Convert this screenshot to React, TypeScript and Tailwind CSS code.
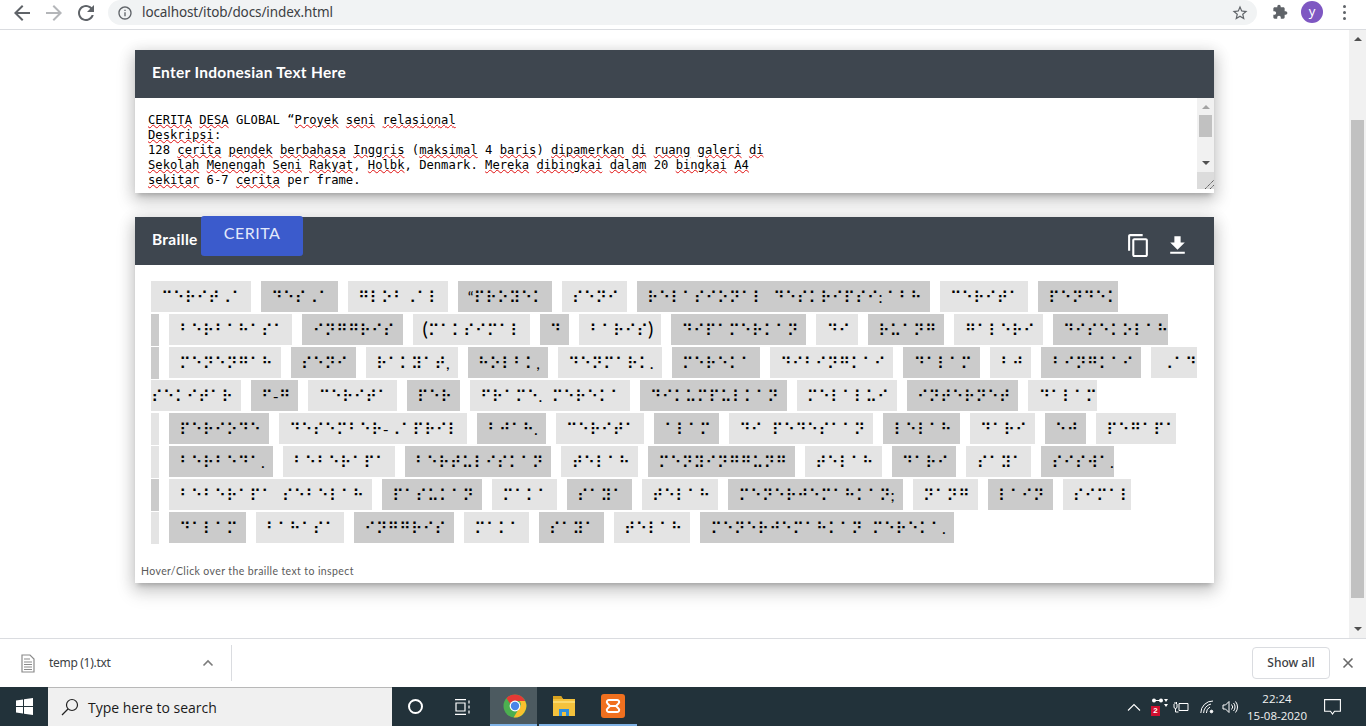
import { Fragment } from 'react';

const BRAILLE: Record<string, string> = {
  a: '⠁', b: '⠃', c: '⠉', d: '⠙', e: '⠑', f: '⠋', g: '⠛', h: '⠓', i: '⠊', j: '⠚', k: '⠅', l: '⠇', m: '⠍',
  n: '⠝', o: '⠕', p: '⠏', q: '⠟', r: '⠗', s: '⠎', t: '⠞', u: '⠥', v: '⠧', w: '⠺', x: '⠭', y: '⠽', z: '⠵',
  A: '⠠⠁', '1': '⠁', '2': '⠃', '3': '⠉', '4': '⠙', '5': '⠑', '6': '⠋', '7': '⠛', '8': '⠓', '9': '⠊', '0': '⠚',
};

const toBraille = (s: string) => s.split('').map((c) => BRAILLE[c] ?? c).join('');

// a trailing | marks a word whose right padding wraps onto the next line
const WORDS = [
  'ceritA', 'desA', 'globAl', '“proyek', 'seni', 'relasional deskripsi:128', 'cerita', 'pendek|',
  'berbahasa', 'inggris', '(maksimal', '4', 'baris)', 'dipamerkan', 'di', 'ruang', 'galeri', 'disekolah|',
  'menengah', 'seni', 'rakyat,', 'holbk,', 'denmark.', 'mereka', 'dibingkai', 'dalam', '20', 'bingkai', 'A4 sekitar',
  '6-7', 'cerita', 'per', 'frame. mereka', 'dikumpulkan', 'melalui', 'internet', 'dalam|',
  'periode', 'desember-April', '2018.', 'cerita', 'alam', 'di pedesaan', 'lelah', 'dari', 'ej', 'pegapa|',
  'berbeda.', 'beberapa', 'bertuliskan', 'telah', 'menyinggung', 'telah', 'dari', 'saya', 'siswa.|',
  'beberapa sebelah', 'pasukan', 'maka', 'saya', 'telah', 'menerjemahkan;', 'nang', 'lain', 'simal|',
  'dalam', 'bahasa', 'inggris', 'maka', 'saya', 'telah', 'menerjemahkan mereka.',
];

const TEXT_LINES: (string | [string])[][] = [
  [['CERITA'], ' ', ['DESA'], ' GLOBAL “', ['Proyek'], ' ', ['seni'], ' ', ['relasional']],
  [['Deskripsi'], ':'],
  ['128 ', ['cerita'], ' ', ['pendek'], ' ', ['berbahasa'], ' ', ['Inggris'], ' (', ['maksimal'], ' 4 ', ['baris'], ') ', ['dipamerkan'], ' ', ['di'], ' ', ['ruang'], ' ', ['galeri'], ' ', ['di']],
  [['Sekolah'], ' ', ['Menengah'], ' ', ['Seni'], ' ', ['Rakyat'], ', ', ['Holbk'], ', Denmark. ', ['Mereka'], ' ', ['dibingkai'], ' ', ['dalam'], ' 20 ', ['bingkai'], ' ', ['A4']],
  [['sekitar'], ' 6-7 ', ['cerita'], ' per frame.'],
];

const Icon = ({ d, size = 24, className = '' }: { d: string; size?: number; className?: string }) => (
  <svg width={size} height={size} viewBox="0 0 24 24" fill="currentColor" className={className}>
    <path d={d} />
  </svg>
);

const WordPart = ({ part }: { part: string }) => (
  <>
    {part.split(/([:()])/).map((piece, i) => {
      if (piece === ':') return <span key={i} className="pr-1">:</span>;
      if (piece === '(' || piece === ')') return <span key={i} className="text-[20px] leading-none">{piece}</span>;
      return <Fragment key={i}>{toBraille(piece)}</Fragment>;
    })}
  </>
);

const BrailleWord = ({ word, index }: { word: string; index: number }) => {
  const endsRow = word.endsWith('|');
  const parts = word.replace('|', '').split(' ');
  const bg = index % 2 === 0 ? 'bg-[#e4e4e4]' : 'bg-[#cbcbcb]';
  return (
    <>
      <span className={`pl-2.5 py-[6.4px] ${bg} ${endsRow ? '' : 'pr-2 mr-2.5'}`}>
        {parts.map((part, i) => (
          <span key={i}>
            {i > 0 && <span className="[word-spacing:5px]"> </span>}
            <WordPart part={part} />
          </span>
        ))}
      </span>
      {endsRow && (
        <>
          <br />
          <span className={`inline-block w-2 h-8 mt-px align-top mr-2.5 ${bg}`} />
        </>
      )}
      <wbr />
    </>
  );
};

const BrowserBar = () => (
  <div className="h-[30px] shrink-0 flex items-start bg-white border-b border-[#dadce0] text-[#5f6368]">
    <div className="flex items-center pl-[10px] h-[25px] gap-2">
      <Icon d="M20 11H7.83l5.59-5.59L12 4l-8 8 8 8 1.41-1.41L7.83 13H20v-2z" />
      <Icon d="M4 11h12.17l-5.59-5.59L12 4l8 8-8 8-1.41-1.41L16.17 13H4v-2z" className="text-[#b4b6b9]" />
      <Icon d="M17.65 6.35C16.2 4.9 14.21 4 12 4c-4.42 0-7.99 3.58-7.99 8s3.57 8 7.99 8c3.73 0 6.84-2.55 7.73-6h-2.08c-.82 2.33-3.04 4-5.65 4-3.31 0-6-2.69-6-6s2.69-6 6-6c1.66 0 3.14.69 4.22 1.78L13 11h7V4l-2.35 2.35z" />
    </div>
    <div className="ml-[10px] w-[1149px] h-[25px] rounded-r-full rounded-l-full bg-[#f1f3f4] flex items-center pl-[9px] pr-[6px]">
      <Icon d="M11 7h2v2h-2zm0 4h2v6h-2zm1-9C6.48 2 2 6.48 2 12s4.48 10 10 10 10-4.48 10-10S17.52 2 12 2zm0 18c-4.41 0-8-3.59-8-8s3.59-8 8-8 8 3.59 8 8-3.59 8-8 8z" size={16} />
      <span className="ml-[9px] pb-px text-[13.5px] text-[#3c4043] font-['Noto_Sans',sans-serif] tracking-[-0.1px]">localhost/itob/docs/index.html</span>
      <Icon d="M22 9.24l-7.19-.62L12 2 9.19 8.63 2 9.24l5.46 4.73L5.82 21 12 17.27 18.18 21l-1.63-7.03L22 9.24zM12 15.4l-3.76 2.27 1-4.28-3.32-2.88 4.38-.38L12 6.1l1.71 4.04 4.38.38-3.32 2.88 1 4.28L12 15.4z" size={18} className="ml-auto mr-[2px]" />
    </div>
    <div className="flex items-center h-[24px] pl-[15px]">
      <Icon d="M20.5 11H19V7c0-1.1-.9-2-2-2h-4V3.5C13 2.12 11.88 1 10.5 1S8 2.12 8 3.5V5H4c-1.1 0-1.99.9-1.99 2v3.8H3.5c1.49 0 2.7 1.21 2.7 2.7s-1.21 2.7-2.7 2.7H2V20c0 1.1.9 2 2 2h3.8v-1.5c0-1.49 1.21-2.7 2.7-2.7 1.49 0 2.7 1.21 2.7 2.7V22H17c1.1 0 2-.9 2-2v-4h1.5c1.38 0 2.5-1.12 2.5-2.5S21.88 11 20.5 11z" size={16} />
      <div className="ml-[13px] w-[22px] h-[22px] rounded-full bg-[#7e57c2] text-white text-[13px] leading-[20px] text-center font-['Noto_Sans',sans-serif]">y</div>
      <div className="ml-[20px] flex flex-col gap-[3px]">
        <span className="w-[3px] h-[3px] rounded-full bg-[#5f6368]" />
        <span className="w-[3px] h-[3px] rounded-full bg-[#5f6368]" />
        <span className="w-[3px] h-[3px] rounded-full bg-[#5f6368]" />
      </div>
    </div>
  </div>
);

const Header = ({ children }: { children: React.ReactNode }) => (
  <div className="h-12 bg-[#3e464f] flex items-center pl-[17px] text-white text-[15.5px] font-bold font-[Lato,sans-serif] relative">
    {children}
  </div>
);

const CARD = 'w-[1079px] bg-white shadow-[0_8px_17px_2px_rgba(0,0,0,0.14),0_3px_14px_2px_rgba(0,0,0,0.12),0_5px_5px_-3px_rgba(0,0,0,0.2)]';

const InputCard = () => (
  <div className={CARD}>
    <Header><span className="pb-[3px] tracking-[0.3px]">Enter Indonesian Text Here</span></Header>
    <div className="h-[95px] flex">
      <div className="flex-1 pl-[13px] pt-[15px] overflow-hidden font-['DejaVu_Sans_Mono',monospace] text-[12.18px] leading-[15px] text-black whitespace-pre">
        {TEXT_LINES.map((line, i) => (
          <div key={i}>
            {line.map((seg, j) =>
              typeof seg === 'string' ? (
                <span key={j}>{seg}</span>
              ) : (
                <span key={j} className="underline decoration-wavy decoration-[#e01010] decoration-[0.6px] underline-offset-0">{seg[0]}</span>
              ),
            )}
          </div>
        ))}
      </div>
      <div className="w-[17px] h-[91px] flex flex-col">
        <div className="h-[74px] bg-[#f1f1f1] flex flex-col items-center">
          <div className="mt-[7px] w-0 h-0 border-x-[4px] border-x-transparent border-b-[4px] border-b-[#a3a3a3]" />
          <div className="mt-[6px] w-[13px] h-[22px] bg-[#c1c1c1]" />
          <div className="mt-auto mb-[7px] w-0 h-0 border-x-[4px] border-x-transparent border-t-[4px] border-t-[#505050]" />
        </div>
        <div className="h-[17px] bg-[#dcdcdc] flex items-end justify-end">
          <svg width="10" height="10" viewBox="0 0 10 10" stroke="#555" strokeWidth="1" strokeDasharray="1.5 0.5">
            <path d="M1 10 L10 1 M6 10 L10 6" />
          </svg>
        </div>
      </div>
    </div>
  </div>
);

const BrailleCard = () => (
  <div className={CARD}>
    <Header>
      <span className="pb-[3px] tracking-[0.3px]">Braille</span>
      <div className="absolute left-[66px] -top-px w-[102px] h-10 rounded-[3px] bg-[#3b5bcc] text-[#e3e9fb] text-[16px] font-normal text-center leading-[34px] tracking-[0.5px]">CERITA</div>
      <div className="ml-auto flex items-center gap-[14.5px] pr-[24px] pt-[9px]">
        <Icon d="M16 1H4c-1.1 0-2 .9-2 2v14h2V3h12V1zm3 4H8c-1.1 0-2 .9-2 2v14c0 1.1.9 2 2 2h11c1.1 0 2-.9 2-2V7c0-1.1-.9-2-2-2zm0 16H8V7h11v14z" size={25} />
        <Icon d="M19 9h-4V3H9v6H5l7 7 7-7zM5 18v2h14v-2H5z" size={25} />
      </div>
    </Header>
    <div className="h-[318px] flex flex-col">
      <div className="px-4 pt-[15px] text-[16px] leading-[33px] text-black font-[Lato,'DejaVu_Sans',sans-serif]">
        {WORDS.map((w, i) => (
          <BrailleWord key={i} word={w} index={i} />
        ))}
      </div>
      <div className="mt-auto pl-1.5 pb-[5px] text-[10.5px] leading-[14px] tracking-[0.4px] text-[#5a5a5a] font-[Lato,sans-serif]">
        Hover/Click over the braille text to inspect
      </div>
    </div>
  </div>
);

const PageScrollbar = () => (
  <div className="w-[17px] bg-[#f1f1f1] flex flex-col items-center">
    <div className="mt-[7px] w-0 h-0 border-x-[4px] border-x-transparent border-b-[4px] border-b-[#505050]" />
    <div className="mt-[79px] w-[13px] h-[478px] bg-[#c1c1c1]" />
    <div className="mt-auto mb-[7px] w-0 h-0 border-x-[4px] border-x-transparent border-t-[4px] border-t-[#505050]" />
  </div>
);

const DownloadBar = () => (
  <div className="h-[49px] shrink-0 bg-white border-t border-[#dadce0] flex items-center pl-[21px] pr-[12px]">
    <svg width="14" height="19" viewBox="0 0 14 19" fill="none" stroke="#8a8a8a" strokeWidth="1.2">
      <path d="M1 1h8l4 4v13H1z" />
      <path d="M3 5h6M3 8h8M3 10.5h8M3 13h8M3 15.5h8" />
    </svg>
    <span className="ml-[14px] text-[12px] tracking-[-0.3px] text-[#3c4043] font-['Noto_Sans',sans-serif]">temp (1).txt</span>
    <svg width="12" height="8" viewBox="0 0 12 8" fill="none" stroke="#7c7c7c" strokeWidth="1.6" className="ml-[91px]">
      <path d="M1.5 6.5 6 2l4.5 4.5" />
    </svg>
    <div className="ml-[17px] w-px h-[36px] bg-[#dadce0]" />
    <div className="ml-auto w-[78px] h-[32px] rounded-[4px] border border-[#dadce0] text-[12px] leading-[30px] text-center text-[#3c4043] font-medium font-['Noto_Sans',sans-serif]">Show all</div>
    <svg width="12" height="12" viewBox="0 0 12 12" stroke="#6a6a6a" strokeWidth="1.6" className="ml-[12px]">
      <path d="M1.5 1.5l9 9M10.5 1.5l-9 9" />
    </svg>
  </div>
);

const ChromeLogo = () => (
  <svg width="24" height="24" viewBox="0 0 24 24">
    <circle cx="12" cy="12" r="11.5" fill="#4caf50" />
    <path d="M12 .5A11.5 11.5 0 0 1 22 6.5L22 7H12a5 5 0 0 0-4.6 3L3.5 4.2A11.5 11.5 0 0 1 12 .5z" fill="#e53935" />
    <path d="M22.1 6.9A11.5 11.5 0 0 1 10.6 23.4L16 14.5 A5 5 0 0 0 16.4 7z" fill="#fbc02d" />
    <circle cx="12" cy="12" r="5.4" fill="#fff" />
    <circle cx="12" cy="12" r="4.2" fill="#4a86e8" />
  </svg>
);

const FolderLogo = () => (
  <svg width="24" height="22" viewBox="0 0 24 22">
    <path d="M1 1h8l2 3h12v17H1z" fill="#f4c23c" />
    <path d="M1 1h8l2 3H1z" fill="#d9a21f" />
    <path d="M1 6h22v2H1z" fill="#fbd96b" />
    <path d="M7 21v-7h10v7h-3v-4h-4v4z" fill="#2f8fdc" />
  </svg>
);

const XamppLogo = () => (
  <div className="w-[24px] h-[24px] rounded-[3px] bg-[#f0701f] flex items-center justify-center">
    <svg width="16" height="18" viewBox="0 0 16 18" fill="none" stroke="#fff" strokeWidth="2">
      <path d="M4 3h8a2 2 0 0 1 1.5 3.5L11 9l2.5 2.5A2 2 0 0 1 12 15H4a2 2 0 0 1-1.5-3.5L5 9 2.5 6.5A2 2 0 0 1 4 3zM5 9h6" />
    </svg>
  </div>
);

const Taskbar = () => (
  <div className="h-[39px] shrink-0 bg-[#22323a] flex items-stretch text-white">
    <div className="w-[48px] flex items-center justify-center">
      <svg width="17" height="17" viewBox="0 0 17 17" fill="#fff">
        <path d="M0 2.4 7 1.4V8H0zM8 1.2 17 0v8H8zM0 9h7v6.6l-7-1zM8 9h9v8l-9-1.2z" />
      </svg>
    </div>
    <div className="w-[344px] bg-[#f0f0f0] border-t border-[#b8b8b8] flex items-center pl-[13px] text-[#1a1a1a]">
      <svg width="18" height="18" viewBox="0 0 18 18" fill="none" stroke="#222" strokeWidth="1.2">
        <circle cx="11" cy="7" r="5.5" />
        <path d="M7 11 1 17" />
      </svg>
      <span className="ml-[9px] pt-px text-[14px] font-['Open_Sans',sans-serif]">Type here to search</span>
    </div>
    <div className="w-[47px] flex items-center justify-center">
      <div className="w-[15px] h-[15px] rounded-full border-[2.5px] border-white" />
    </div>
    <div className="w-[47px] flex items-center justify-center">
      <svg width="18" height="16" viewBox="0 0 18 16" fill="none" stroke="#fff" strokeWidth="1.2">
        <path d="M1 .6h11M1 15.4h11M2 4h9v8H2zM15 1.5v3M15 6.5v3M15 11.5v3" />
      </svg>
    </div>
    <div className="w-[47px] bg-[#4c5a60] border-b-2 border-[#7fb2e5] flex items-center justify-center mr-[2px] ml-[4px] pl-[2px]">
      <ChromeLogo />
    </div>
    <div className="w-[49px] border-b-2 border-[#7fb2e5] flex items-center justify-center">
      <FolderLogo />
    </div>
    <div className="w-[49px] border-b-2 border-[#7fb2e5] flex items-center justify-center">
      <XamppLogo />
    </div>
    <div className="ml-auto flex items-center pr-[25px]">
      <svg width="14" height="8" viewBox="0 0 14 8" fill="none" stroke="#fff" strokeWidth="1.1"><path d="M1 7.5 7 1.5l6 6" /></svg>
      <div className="relative ml-[10px] w-[18px] h-[18px]">
        <svg width="18" height="12" viewBox="0 0 18 12" fill="#fff">
          <circle cx="3" cy="2.5" r="2" /><circle cx="10" cy="2.5" r="2" /><rect x="3" y="2" width="7" height="1" /><path d="M13 1h4l-2 3zM13 6h4l-2 3z" />
        </svg>
        <span className="absolute left-0 bottom-0 w-[9px] h-[10px] bg-[#d10f2f] text-[8px] leading-[10px] font-bold text-center font-['Liberation_Sans',sans-serif]">2</span>
      </div>
      <svg width="16" height="12" viewBox="0 0 16 12" fill="none" stroke="#fff" strokeWidth="1" className="ml-[4px]">
        <path d="M6 2.5h9v7H6zM1 3v3a1.5 1.5 0 0 0 3 0V3M2 3V1M3.5 3V1M2.5 7.5V11h3" />
      </svg>
      <svg width="14" height="14" viewBox="0 0 14 14" fill="none" stroke="#fff" strokeWidth="1" className="ml-[11px]">
        <path d="M.8 13A12 12 0 0 1 13 1M3.6 13A9.4 9.4 0 0 1 11 4M6.4 13A6.6 6.6 0 0 1 10 7" /><circle cx="11.5" cy="11.5" r="1.3" fill="#fff" />
      </svg>
      <svg width="17" height="14" viewBox="0 0 17 14" fill="none" stroke="#fff" strokeWidth="1" className="ml-[8px]">
        <path d="M1 5h2.5L7 1.5v11L3.5 9H1zM9.5 4.5a3.5 3.5 0 0 1 0 5M11.5 3a6 6 0 0 1 0 8M13.5 1.5a8.5 8.5 0 0 1 0 11" />
      </svg>
      <div className="ml-[3px] w-[70px] text-center text-[11.5px] leading-[17px] text-[#f2f2f2] font-['Open_Sans',sans-serif]">
        <div>22:24</div>
        <div>15-08-2020</div>
      </div>
      <svg width="17" height="16" viewBox="0 0 17 16" fill="none" stroke="#fff" strokeWidth="1.1" className="ml-[12px]">
        <path d="M.6.6h15.8v11.6H10.5L8.5 15l-2-2.8H.6z" />
      </svg>
    </div>
  </div>
);

export default function App() {
  return (
    <div className="h-screen w-full flex flex-col overflow-hidden bg-white">
      <BrowserBar />
      <div className="flex-1 flex min-h-0">
        <div className="flex-1 pl-[135px] pt-5 flex flex-col gap-6">
          <InputCard />
          <BrailleCard />
        </div>
        <PageScrollbar />
      </div>
      <DownloadBar />
      <Taskbar />
    </div>
  );
}
